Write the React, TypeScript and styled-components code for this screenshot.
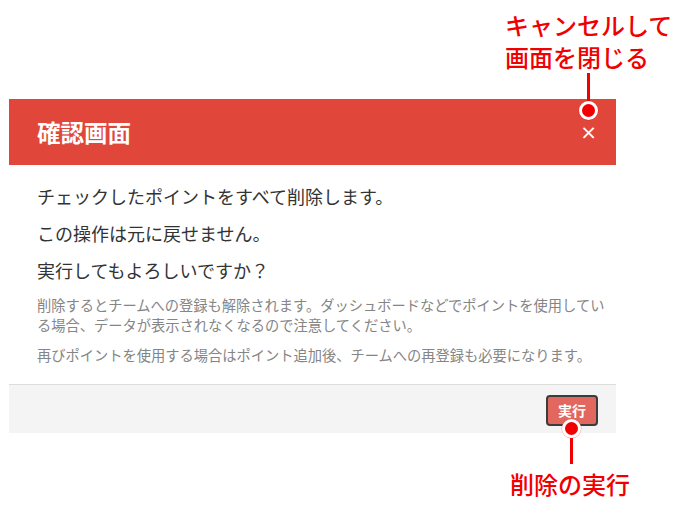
import React from 'react'
import styled, { createGlobalStyle } from 'styled-components'

const colors = {
  header: '#e0463a',
  annotation: '#f00000',
  text: '#333333',
  note: '#858585',
  footer: '#f4f4f4',
  rule: '#dcdcdc',
  button: '#e2675e',
  buttonBorder: '#3c3c3c'
}

const GlobalStyle = createGlobalStyle`
  html, body {
    margin: 0;
    padding: 0;
    background: #ffffff;
  }
  body {
    font-family: "Noto Sans CJK JP", "Noto Sans", sans-serif;
  }
`

const Page = styled.div`
  position: relative;
  width: 680px;
  height: 510px;
  padding: 99px 0 0 9px;
  box-sizing: border-box;
  overflow: hidden;
`

const Dialog = styled.div`
  width: 607px;
  display: flex;
  flex-direction: column;
  background: #ffffff;
`

const Header = styled.div`
  height: 66px;
  background: ${colors.header};
  display: flex;
  align-items: center;
  justify-content: space-between;
  padding: 0 19px 0 28px;
  box-sizing: border-box;
`

const Title = styled.h1`
  margin: 0;
  font-size: 23.5px;
  font-weight: 700;
  color: #ffffff;
`

const CloseButton = styled.span`
  color: #ffffff;
  font-size: 20px;
  line-height: 1;
  font-family: "DejaVu Sans", sans-serif;
`

const Body = styled.div`
  padding: 19px 0 19px 28px;
`

const Lead = styled.p`
  margin: 0 0 12px;
  font-size: 18px;
  line-height: 25px;
  color: ${colors.text};
`

const Note = styled.p<{ first?: boolean }>`
  margin: ${({ first }) => (first ? '6px' : '10px')} 0 0;
  font-size: 14.25px;
  line-height: 20px;
  color: ${colors.note};
`

const Footer = styled.div`
  height: 48px;
  border-top: 1px solid ${colors.rule};
  background: ${colors.footer};
  display: flex;
  align-items: center;
  justify-content: flex-end;
  padding-right: 18px;
`

const RunButton = styled.button`
  width: 52px;
  height: 31px;
  background: ${colors.button};
  border: 2px solid ${colors.buttonBorder};
  border-radius: 4px;
  color: #ffffff;
  font-family: "Noto Sans CJK JP", sans-serif;
  font-size: 14px;
  font-weight: 700;
  padding: 0;
  margin-top: 2px;
`

const Callout = styled.div<{ left: number; top: number }>`
  position: absolute;
  left: ${({ left }) => left}px;
  top: ${({ top }) => top}px;
  display: flex;
  flex-direction: column;
  align-items: center;
`

const CalloutText = styled.div`
  color: ${colors.annotation};
  font-size: 24px;
  font-weight: 500;
  line-height: 32px;
  white-space: nowrap;
`

const Stem = styled.div<{ length: number }>`
  width: 3px;
  height: ${({ length }) => length}px;
  background: ${colors.annotation};
`

const Dot = styled.div`
  width: 19px;
  height: 19px;
  box-sizing: border-box;
  border-radius: 50%;
  background: ${colors.annotation};
  border: 3px solid #ffffff;
  box-shadow: 0 0 0 0.5px rgba(240, 0, 0, 0.35);
`

export default function App () {
  return (
    <Page>
      <GlobalStyle />
      <Dialog>
        <Header>
          <Title>確認画面</Title>
          <CloseButton>×</CloseButton>
        </Header>
        <Body>
          <Lead>チェックしたポイントをすべて削除します。</Lead>
          <Lead>この操作は元に戻せません。</Lead>
          <Lead>実行してもよろしいですか？</Lead>
          <Note first>削除するとチームへの登録も解除されます。ダッシュボードなどでポイントを使用している場合、データが表示されなくなるので注意してください。</Note>
          <Note>再びポイントを使用する場合はポイント追加後、チームへの再登録も必要になります。</Note>
        </Body>
        <Footer>
          <RunButton>実行</RunButton>
        </Footer>
      </Dialog>

      <Callout left={505} top={9}>
        <CalloutText>キャンセルして<br />画面を閉じる</CalloutText>
      </Callout>
      <Callout left={579} top={73}>
        <Stem length={28} />
        <Dot />
      </Callout>

      <Callout left={562} top={419}>
        <Dot />
        <Stem length={26} />
      </Callout>
      <Callout left={510} top={468}>
        <CalloutText>削除の実行</CalloutText>
      </Callout>
    </Page>
  )
}
